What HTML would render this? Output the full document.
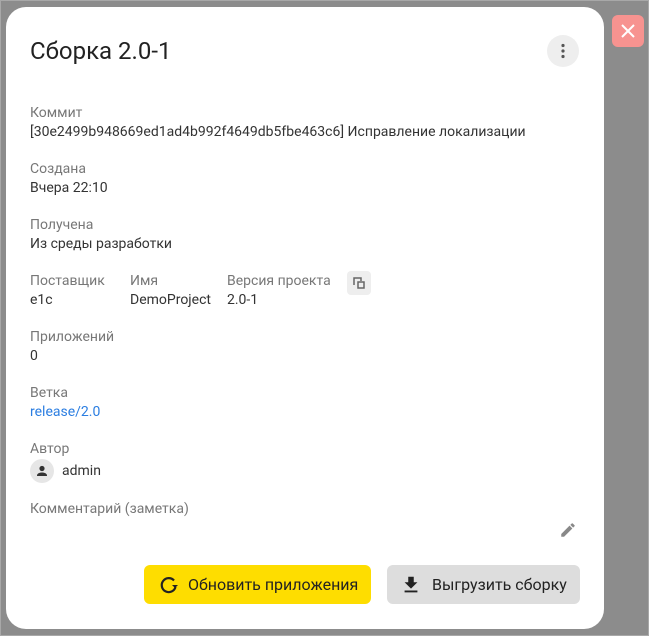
<!DOCTYPE html>
<html><head><meta charset="utf-8"><style>
body{margin:0;width:649px;height:636px;background:#8c8c8c;font-family:"Roboto","Liberation Sans",sans-serif;position:relative;overflow:hidden}
.outer{position:absolute;left:0;top:0;width:647px;height:634px;border:1px solid #a8a8a8}
.dlg{position:absolute;left:6px;top:7px;width:598px;height:622px;background:#fff;border-radius:20px}
.close{position:absolute;left:612px;top:15px;width:32px;height:32px;background:#f79390;border-radius:6px}
h1{position:absolute;left:24px;top:30px;margin:0;font-weight:400;font-size:24px;color:#222}
.more{position:absolute;left:541px;top:28px;width:32px;height:32px;border-radius:50%;background:#eee}
.l{position:absolute;font-size:14px;color:#777}
.v{position:absolute;font-size:14px;color:#333}
.btn{position:absolute;top:558px;height:39px;border-radius:6px;font-size:16px;color:#222;display:flex;align-items:center}
</style></head><body>
<div class="outer"></div>
<div class="dlg">
<h1>Сборка 2.0-1</h1>
<div class="more"><svg width="32" height="32"><circle cx="16" cy="10.5" r="1.6" fill="#555"/><circle cx="16" cy="16" r="1.6" fill="#555"/><circle cx="16" cy="21.5" r="1.6" fill="#555"/></svg></div>
<div class="l" style="left:24px;top:98px">Коммит</div>
<div class="v" style="left:24px;top:117px">[30e2499b948669ed1ad4b992f4649db5fbe463c6] Исправление локализации</div>
<div class="l" style="left:24px;top:154px">Создана</div>
<div class="v" style="left:24px;top:173px">Вчера 22:10</div>
<div class="l" style="left:24px;top:210px">Получена</div>
<div class="v" style="left:24px;top:229px">Из среды разработки</div>
<div class="l" style="left:24px;top:266px">Поставщик</div>
<div class="v" style="left:24px;top:285px">e1c</div>
<div class="l" style="left:124px;top:266px">Имя</div>
<div class="v" style="left:124px;top:285px">DemoProject</div>
<div class="l" style="left:221px;top:266px">Версия проекта</div>
<div class="v" style="left:221px;top:285px">2.0-1</div>
<div style="position:absolute;left:341px;top:264px;width:24px;height:24px;border-radius:4px;background:#eee"><svg width="24" height="24"><path d="M7 14V7h7v3" fill="none" stroke="#666" stroke-width="1.5"/><rect x="11" y="11" width="6" height="6" fill="none" stroke="#666" stroke-width="1.5"/></svg></div>
<div class="l" style="left:24px;top:322px">Приложений</div>
<div class="v" style="left:24px;top:341px">0</div>
<div class="l" style="left:24px;top:378px">Ветка</div>
<div class="v" style="left:24px;top:397px;color:#2a7de1">release/2.0</div>
<div class="l" style="left:24px;top:434px">Автор</div>
<div style="position:absolute;left:24px;top:452px;width:24px;height:24px;border-radius:50%;background:#e6e6e6"><svg width="24" height="24"><circle cx="12" cy="9.5" r="2.6" fill="#333"/><path d="M7 16.5c0-2.2 3-3 5-3s5 .8 5 3v.5H7z" fill="#333"/></svg></div>
<div class="v" style="left:56px;top:456px">admin</div>
<div class="l" style="left:24px;top:494px">Комментарий (заметка)</div>
<svg style="position:absolute;left:553px;top:514px" width="18" height="18" viewBox="0 0 24 24"><path d="M3 17.25V21h3.75L17.81 9.94l-3.75-3.75zM20.71 7.04a1 1 0 000-1.41l-2.34-2.34a1 1 0 00-1.41 0l-1.83 1.83 3.75 3.75z" fill="#888"/></svg>
<div class="btn" style="left:138px;width:227px;background:#fedd00"><svg style="margin-left:13px" width="24" height="24" viewBox="0 0 24 24"><path d="M17 7.5A7 7 0 1 0 18.5 14" fill="none" stroke="#222" stroke-width="2.2"/><path d="M15 12h6l-3 3z" fill="#222"/></svg><span style="margin-left:7px">Обновить приложения</span></div>
<div class="btn" style="left:381px;width:193px;background:#ddd"><svg style="margin-left:13px" width="22" height="22" viewBox="0 0 24 24"><path d="M19 9h-4V3H9v6H5l7 7zM5 18v2h14v-2z" fill="#222"/></svg><span style="margin-left:10px">Выгрузить сборку</span></div>
</div>
<div class="close"><svg width="32" height="32"><path d="M10 10l12 12M22 10L10 22" stroke="#fff" stroke-width="2"/></svg></div>
</body></html>
